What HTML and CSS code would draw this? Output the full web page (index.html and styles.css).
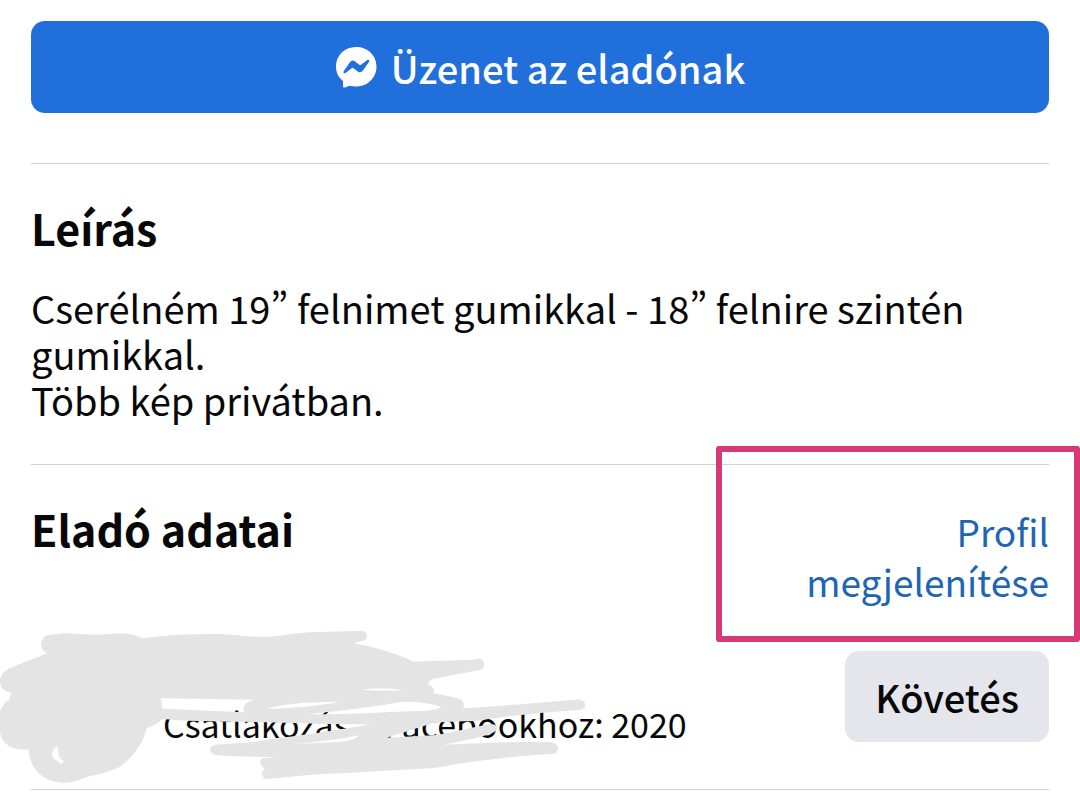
FILE: index.html
```html
<!DOCTYPE html>
<html lang="hu">
<head>
    <meta charset="UTF-8">
    <meta name="viewport" content="width=device-width, initial-scale=1.0">
    <title>Hirdetés</title>
    <link rel="stylesheet" href="styles.css">
</head>
<body>
    <main class="listing">
        <button class="message-button" type="button">
            <svg class="messenger-icon" viewBox="0 0 42 42" aria-hidden="true">
                <path fill="#fff" d="M21 1C9.500 1 1 9.300 1 20.500c0 6 2.500 11 7 14.500v5c0 1.300.8 1.900 2 1.500l4.500-1.700c2 .5 4.300.8 6.500.8 11.500 0 20.500-8.600 20.500-20S32.500 1 21 1z"/>
                <path fill="#216fdb" d="M8.700 25.200l6.200-8.900q2.200-3 5.200-.9l4.200 3.300q.9.700 1.800 0l6.200-4.600c1.400-.9 2.700.3 1.800 1.700l-6.200 8.800q-2.200 3-5.200.9l-4.200-3.300q-.9-.7-1.800 0l-6.200 4.700c-1.400.9-2.700-.3-1.800-1.700z"/>
            </svg>
            <span>Üzenet az eladónak</span>
        </button>

        <!-- Leírás -->
        <section class="section">
            <h2>Leírás</h2>
            <p class="description">Cserélném 19” felnimet gumikkal - 18” felnire szintén gumikkal.<br>Több kép privátban.</p>
        </section>

        <!-- Eladó -->
        <section class="section seller">
            <div class="seller-header">
                <h2>Eladó adatai</h2>
                <a class="profile-link" href="#">Profil megjelenítése</a>
            </div>
            <div class="seller-row">
                <p class="joined">Csatlakozás a Facebookhoz: 2020</p>
                <button class="follow-button" type="button">Követés</button>
                <svg class="scribble" viewBox="0 0 2220 546" aria-hidden="true">
                    <path fill="#e4e4e4" fill-rule="evenodd" d="M145 45C170 42 200 37 220 41S260 40 290 45C320 42 380 38 395 43Q410 46 425 55L480 49C560 42 650 40 700 45C760 50 800 52 830 48C870 44 900 36 960 36L1088 32C1106 36 1106 58 1088 62L1060 70C1120 80 1190 100 1240 125C1290 122 1400 120 1425 119C1442 112 1452 118 1452 135C1452 148 1442 150 1425 153L1295 177Q1285 184 1283 193Q1306 200 1300 220C1340 228 1370 232 1385 240Q1394 250 1390 265C1500 258 1650 245 1725 239C1762 236 1764 266 1740 270C1600 280 1500 290 1430 303C1370 304 1330 306 1300 309L1160 353L1300 346C1360 338 1430 318 1475 312C1498 315 1494 333 1475 340Q1440 354 1330 374C1400 372 1480 365 1650 366C1680 368 1680 398 1660 402C1560 407 1500 415 1460 420C1380 428 1340 440 1290 445L1020 460L950 463L800 477C784 475 781 455 795 446C776 436 778 415 790 415L830 412C760 410 700 410 645 405C625 400 626 378 645 374L760 366Q820 356 880 349C960 338 1050 325 1110 313L980 312L850 308L700 305L560 302L487 297Q470 315 440 325C430 370 400 410 360 440C330 455 300 462 270 468C240 480 215 490 190 488C130 485 90 450 85 388C50 392 0 380 0 330V275Q8 250 30 238Q26 230 35 218C10 216 0 200 0 180C5 150 30 145 60 132L142 100C110 85 125 48 145 45Z
                        M482 235L765 239C738 243 726 258 732 277L487 266Q486 248 482 235Z
                        M800 267Q850 247 1015 245C980 255 910 262 800 267Z
                        M920 283Q1100 264 1210 245Q1290 245 1325 262Q1300 274 1250 273C1140 277 1060 283 920 283Z
                        M1085 210Q1130 200 1210 210Q1150 213 1085 210Z
                        M880 373Q1000 362 1080 345Q1060 363 1020 365Z
                        M170 380C160 385 155 400 157 408C163 420 174 424 183 432L192 424Q186 418 181 417C176 407 173 392 173 382Z"/>
                </svg>
            </div>
            <div class="highlight"></div>
        </section>

        <hr>
    </main>
</body>
</html>
```

FILE: styles.css
```css
* {
    box-sizing: border-box;
}
body {
    margin: 0;
    background-color: #fff;
    color: #080809;
    font-family: "Noto Sans CJK SC", sans-serif;
    font-size: 38px;
}
.listing {
    padding: 21px 31px 0;
}
button {
    border: none;
    font-family: inherit;
    font-weight: 500;
    cursor: pointer;
}
.message-button {
    display: flex;
    justify-content: center;
    align-items: center;
    gap: 14px;
    width: 100%;
    height: 92px;
    margin-bottom: 50px;
    border-radius: 14px;
    background-color: #216fdb;
    color: #fff;
    font-size: 38px;
}
.messenger-icon {
    width: 42px;
    height: 42px;
}
.section {
    border-top: 1px solid #ced0d4;
}
h2 {
    margin: 0;
    font-size: 43px;
    font-weight: 700;
    line-height: 60px;
}
.section h2 {
    padding-top: 33px;
}
.description {
    margin: 0;
    padding: 28px 0 41px;
    line-height: 46px;
    font-variant-east-asian: proportional-width;
}
.seller {
    position: relative;
}
.seller-header {
    display: flex;
    justify-content: space-between;
    align-items: flex-start;
}
.profile-link {
    width: 260px;
    padding-top: 41px;
    color: #2064b4;
    font-size: 37px;
    line-height: 50px;
    text-align: right;
    text-decoration: none;
}
.seller-row {
    position: relative;
    display: flex;
    justify-content: space-between;
    align-items: flex-start;
    padding: 45px 0 45px 132px;
}
.joined {
    margin: 0;
    padding-top: 53px;
    font-size: 34px;
    line-height: 40px;
}
.follow-button {
    height: 91px;
    padding: 0 30px;
    border-radius: 14px;
    background-color: #e4e6eb;
    color: #080809;
    font-size: 38px;
}
/* strokes painted over the seller's name and photo */
.scribble {
    position: absolute;
    top: 14px;
    left: -31px;
    width: 740px;
    height: 182px;
    pointer-events: none;
}
.highlight {
    position: absolute;
    top: -19px;
    right: -31px;
    width: 364px;
    height: 196px;
    border: 6px solid #d63a76;
    border-radius: 3px;
    pointer-events: none;
}
hr {
    height: 1px;
    margin: 0;
    border: none;
    background-color: #ced0d4;
}
```
